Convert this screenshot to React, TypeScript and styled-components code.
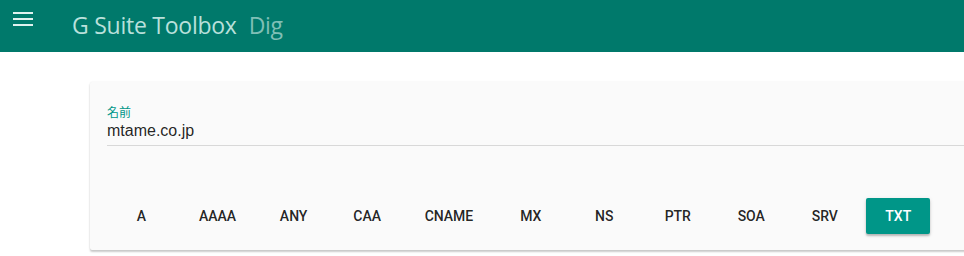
import React, { useState } from 'react'
import styled, { createGlobalStyle } from 'styled-components'

const GlobalStyle = createGlobalStyle`
  html, body {
    margin: 0;
    padding: 0;
    background: #ffffff;
    overflow: hidden;
  }
`;

const Page = styled.div`
  width: 964px;
  height: 256px;
  overflow: hidden;
  font-family: Roboto, "Noto Sans", sans-serif;
`;

const TopBar = styled.header`
  height: 52px;
  background: #00796b;
  display: flex;
  align-items: flex-start;
`;

const MenuButton = styled.button`
  width: 20px;
  height: 14px;
  margin: 12px 0 0 13px;
  padding: 0;
  border: none;
  background: transparent;
  display: flex;
  flex-direction: column;
  justify-content: space-between;
  cursor: pointer;
`;

const MenuLine = styled.span`
  display: block;
  height: 2px;
  background: #dff2ef;
`;

const Title = styled.h1`
  margin: 9px 0 0 39px;
  font-family: "Open Sans", Lato, sans-serif;
  font-weight: 400;
  font-size: 23px;
  line-height: 32px;
  letter-spacing: -0.25px;
  color: #b9e0db;
  display: flex;
  gap: 12px;
`;

const SubTitle = styled.span`
  color: #7fbfb6;
  letter-spacing: -0.3px;
`;

const Card = styled.section`
  margin: 30px 0 0 90px;
  width: 920px;
  background: #fafafa;
  box-shadow: 0 2px 2px rgba(0, 0, 0, 0.2), 0 0 2px rgba(0, 0, 0, 0.08);
  border-radius: 2px;
  padding: 23px 0 16px 17px;
  box-sizing: border-box;
`;

const Field = styled.div`
  display: flex;
  flex-direction: column;
  border-bottom: 1px solid #d8d8d8;
  padding-bottom: 4px;
`;

const Label = styled.label`
  font-family: "Noto Sans CJK JP", "Noto Sans", sans-serif;
  font-size: 12px;
  line-height: 14px;
  color: #009688;
`;

const Input = styled.input`
  margin-top: 2px;
  padding: 0;
  border: none;
  outline: none;
  background: transparent;
  font-family: "Liberation Sans", Arial, sans-serif;
  font-size: 16px;
  line-height: 20px;
  height: 20px;
  color: rgba(0, 0, 0, 0.87);
`;

const TypeRow = styled.div`
  display: flex;
  gap: 9.5px;
  margin-top: 52px;
  padding-left: 2.5px;
`;

const TypeButton = styled.button<{ $active?: boolean }>`
  min-width: 64px;
  height: 36px;
  padding: 0 16px;
  border: none;
  border-radius: 2px;
  font-family: Roboto, sans-serif;
  font-weight: 500;
  font-size: 14px;
  text-transform: uppercase;
  cursor: pointer;
  background: ${p => (p.$active ? '#009688' : 'transparent')};
  color: ${p => (p.$active ? '#ffffff' : 'rgba(0, 0, 0, 0.87)')};
  box-shadow: ${p =>
    p.$active ? '0 2px 2px rgba(0,0,0,0.22), 0 1px 4px rgba(0,0,0,0.1)' : 'none'};
`;

const types = ['A', 'AAAA', 'ANY', 'CAA', 'CNAME', 'MX', 'NS', 'PTR', 'SOA', 'SRV', 'TXT'];

const App = () => {
  const [name, setName] = useState('mtame.co.jp');
  const [selected, setSelected] = useState('TXT');
  return (
    <Page>
      <GlobalStyle />
      <TopBar>
        <MenuButton aria-label="menu">
          <MenuLine />
          <MenuLine />
          <MenuLine />
        </MenuButton>
        <Title>
          G Suite Toolbox<SubTitle>Dig</SubTitle>
        </Title>
      </TopBar>
      <Card>
        <Field>
          <Label>名前</Label>
          <Input value={name} onChange={e => setName(e.target.value)} />
        </Field>
        <TypeRow>
          {types.map(t => (
            <TypeButton key={t} $active={t === selected} onClick={() => setSelected(t)}>
              {t}
            </TypeButton>
          ))}
        </TypeRow>
      </Card>
    </Page>
  )
}

export default App
